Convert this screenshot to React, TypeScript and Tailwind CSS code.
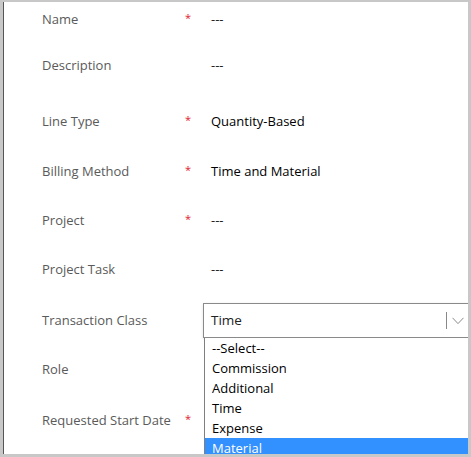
interface Field {
  label: string;
  required?: boolean;
  value?: string;
  strong?: boolean;
  gap: string;
  select?: boolean;
}

const fields: Field[] = [
  { label: "Name", required: true, value: "---", gap: "mb-[12px]" },
  { label: "Description", value: "---", gap: "mb-[22px]" },
  { label: "Line Type", required: true, value: "Quantity-Based", strong: true, gap: "mb-[16px]" },
  { label: "Billing Method", required: true, value: "Time and Material", strong: true, gap: "mb-[15px]" },
  { label: "Project", required: true, value: "---", gap: "mb-[15px]" },
  { label: "Project Task", value: "---", gap: "mb-[16px]" },
  { label: "Transaction Class", select: true, gap: "mb-[16px]" },
  { label: "Role", gap: "mb-[17px]" },
  { label: "Requested Start Date", required: true, gap: "mb-0" },
];

const options = ["--Select--", "Commission", "Additional", "Time", "Expense", "Material"];

const TransactionSelect = () => (
  <div className="relative -mr-[4px]">
    <div className="flex h-[35px] items-center border border-[#8a8a8a] bg-white pl-[7px] text-[13.5px] text-[#222] shadow-[0_1px_3px_rgba(0,0,0,0.12)]">
      <span className="flex-1">Time</span>
      <span className="h-[17px] w-px bg-[#888]" />
      <svg width="12" height="8" viewBox="0 0 12 8" className="mr-[7px] ml-[5px]">
        <path d="M0.5 0.8 L6 6.6 L11.5 0.8" fill="none" stroke="#8a8a8a" strokeWidth="1" />
      </svg>
    </div>
    <ul className="absolute top-full right-0 left-px z-10 border border-t-0 border-[#7f7f7f] bg-white">
      {options.map((option) => (
        <li
          key={option}
          className={
            option === "Material"
              ? "h-[20px] bg-[#3390ff] pl-[7px] text-[13px] leading-[20px] text-white"
              : "h-[20px] pl-[7px] text-[13px] leading-[20px] text-black"
          }
        >
          {option}
        </li>
      ))}
    </ul>
  </div>
);

const App = () => {
  return (
    <div
      className="h-[457px] w-[471px] bg-[#c8c8c8] pt-[2px] pr-[3px] pb-[3px] pl-[3px]"
      style={{ fontFamily: '"Segoe UI", "Open Sans", sans-serif' }}
    >
      <div className="h-full overflow-hidden border-l border-[#555] bg-white pl-[38px]">
        {fields.map((field) => (
          <div
            key={field.label}
            className={`grid h-[34px] grid-cols-[145px_16px_1fr] items-center pt-px ${field.gap}`}
          >
            <span className="text-[13px] text-[#5a5a5a]">{field.label}</span>
            <span className="-mt-[3px] -ml-[2px] text-[11px] text-[#e0202c]">
              {field.required ? "*" : ""}
            </span>
            {field.select ? (
              <TransactionSelect />
            ) : (
              <span
                className={
                  field.strong
                    ? "pl-[8px] text-[13px] font-medium text-black"
                    : "pl-[8px] text-[13px] text-[#222]"
                }
              >
                {field.value}
              </span>
            )}
          </div>
        ))}
      </div>
    </div>
  );
};

export default App;
